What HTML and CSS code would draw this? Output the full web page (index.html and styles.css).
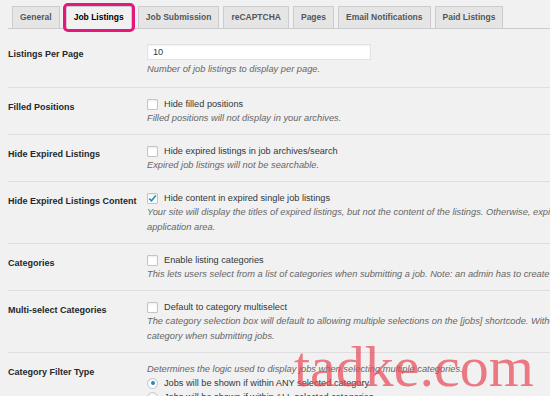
FILE: index.html
```html
<!DOCTYPE html>
<html lang="en">
<head>
    <meta charset="UTF-8">
    <meta name="viewport" content="width=device-width, initial-scale=1.0">
    <title>Job Listings Settings</title>
    <link rel="stylesheet" href="styles.css">
</head>
<body>
    <div class="wrap">
        <nav class="tabs">
            <a class="tab">General</a>
            <a class="tab active">Job Listings</a>
            <a class="tab">Job Submission</a>
            <a class="tab">reCAPTCHA</a>
            <a class="tab">Pages</a>
            <a class="tab">Email Notifications</a>
            <a class="tab">Paid Listings</a>
        </nav>

        <div class="settings">
            <div class="row">
                <div class="label">Listings Per Page</div>
                <div class="field">
                    <input class="text" type="text" value="10">
                    <p class="desc">Number of job listings to display per page.</p>
                </div>
            </div>
            <div class="row">
                <div class="label">Filled Positions</div>
                <div class="field">
                    <div class="line"><span class="check"></span>Hide filled positions</div>
                    <p class="desc">Filled positions will not display in your archives.</p>
                </div>
            </div>
            <div class="row">
                <div class="label">Hide Expired Listings</div>
                <div class="field">
                    <div class="line"><span class="check"></span>Hide expired listings in job archives/search</div>
                    <p class="desc">Expired job listings will not be searchable.</p>
                </div>
            </div>
            <div class="row">
                <div class="label">Hide Expired Listings Content</div>
                <div class="field">
                    <div class="line">
                        <span class="check">
                            <svg width="9" height="9" viewBox="0 0 9 9"><path d="M1.3 4.6 L3.5 6.8 L7.8 1.6" fill="none" stroke="#1e8cbe" stroke-width="1.6"/></svg>
                        </span>Hide content in expired single job listings
                    </div>
                    <p class="desc">Your site will display the titles of expired listings, but not the content of the listings. Otherwise, expired listings display their full content minus the application area.</p>
                </div>
            </div>
            <div class="row">
                <div class="label">Categories</div>
                <div class="field">
                    <div class="line"><span class="check"></span>Enable listing categories</div>
                    <p class="desc">This lets users select from a list of categories when submitting a job. Note: an admin has to create categories before site users can select them.</p>
                </div>
            </div>
            <div class="row">
                <div class="label">Multi-select Categories</div>
                <div class="field">
                    <div class="line"><span class="check"></span>Default to category multiselect</div>
                    <p class="desc">The category selection box will default to allowing multiple selections on the [jobs] shortcode. Without this, visitors will only be able to select a single category when submitting jobs.</p>
                </div>
            </div>
            <div class="row">
                <div class="label">Category Filter Type</div>
                <div class="field">
                    <p class="desc">Determines the logic used to display jobs when selecting multiple categories.</p>
                    <div class="line"><span class="radio on"></span>Jobs will be shown if within ANY selected category</div>
                    <div class="line"><span class="radio"></span>Jobs will be shown if within ALL selected categories</div>
                </div>
            </div>
        </div>

        <div class="watermark">tadke.com</div>
    </div>
</body>
</html>
```

FILE: styles.css
```css
html, body {
    margin: 0;
    overflow: hidden;
}
body {
    background-color: #f1f1f1;
    color: #23282d;
    font-family: "Liberation Sans", Arial, sans-serif;
}
.wrap {
    position: relative;
    width: 780px;
    height: 396px;
    padding: 0 8px;
}
.tabs {
    display: flex;
    align-items: flex-end;
    padding-top: 6px;
    border-bottom: 1px solid #ccc;
    height: 22px;
}
.tab {
    margin-left: 4px;
    margin-bottom: -1px;
    padding: 4px 7px 5px;
    border: 1px solid #ccc;
    background-color: #e5e5e5;
    color: #555;
    font-size: 8.5px;
    font-weight: bold;
    line-height: 12px;
    white-space: nowrap;
}
.tab.active {
    margin-left: 6px;
    margin-right: 2px;
    background-color: #f1f1f1;
    border-bottom-color: #f1f1f1;
    color: #000;
    outline: 3px solid #e3177c;
    border-radius: 2px;
    position: relative;
    z-index: 1;
}
.settings {
    margin-top: 6px;
}
.row {
    display: grid;
    grid-template-columns: 139px 620px;
    padding: 9px 0;
    border-bottom: 1px solid #dedede;
}
.row:first-child {
    padding-bottom: 11px;
}
.row:last-child {
    border-bottom: none;
}
.label {
    padding-top: 3px;
    font-size: 9px;
    font-weight: bold;
    line-height: 14px;
}
.line {
    display: flex;
    align-items: center;
    height: 14px;
    font-size: 9.2px;
    color: #32373c;
    white-space: nowrap;
}
.check, .radio {
    display: inline-flex;
    align-items: center;
    justify-content: center;
    box-sizing: border-box;
    width: 11px;
    height: 11px;
    margin-right: 6px;
    background-color: #fff;
    border: 1px solid #c3c6c9;
    box-shadow: inset 0 1px 2px rgba(0, 0, 0, .08);
}
.check {
    border-radius: 1px;
}
.radio {
    border-radius: 50%;
}
.radio.on::after {
    content: '';
    width: 4px;
    height: 4px;
    border-radius: 50%;
    background-color: #1e8cbe;
}
.text {
    display: block;
    box-sizing: border-box;
    width: 224px;
    height: 16px;
    margin: 0 0 2px;
    padding: 0 5px;
    border: 1px solid #e2e2e2;
    background-color: #fff;
    box-shadow: inset 0 1px 2px rgba(0, 0, 0, .05);
    font-family: inherit;
    font-size: 9.2px;
    color: #32373c;
}
.desc {
    margin: 0;
    font-size: 9.3px;
    font-style: italic;
    line-height: 14px;
    color: #666;
}
.row:nth-child(6) .desc,
.row:nth-child(4) .desc {
    line-height: 14.5px;
}
.watermark {
    position: absolute;
    left: 294px;
    top: 338px;
    font-family: "Liberation Serif", "Times New Roman", serif;
    font-size: 58px;
    line-height: 1;
    color: rgba(232, 70, 85, .7);
    pointer-events: none;
}
```
